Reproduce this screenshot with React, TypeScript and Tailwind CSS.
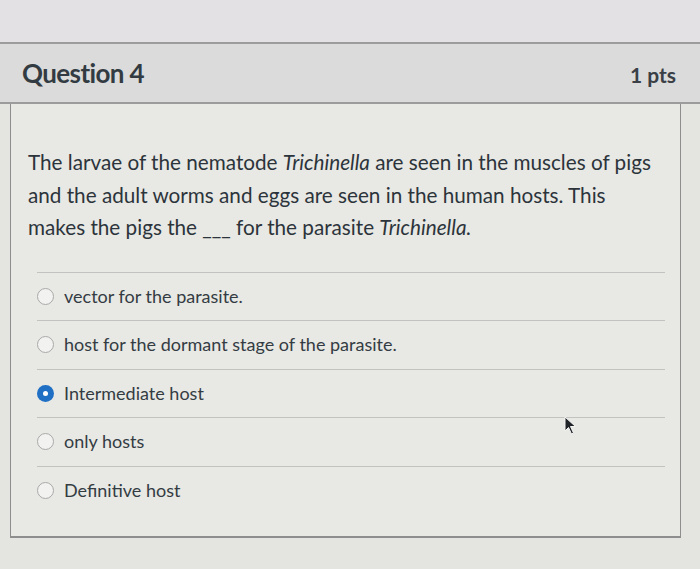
const OPTIONS = [
  { label: "vector for the parasite.", checked: false },
  { label: "host for the dormant stage of the parasite.", checked: false },
  { label: "Intermediate host", checked: true },
  { label: "only hosts", checked: false },
  { label: "Definitive host", checked: false },
];

function Radio({ checked }: { checked: boolean }) {
  if (checked) {
    return (
      <span className="flex h-[17px] w-[17px] shrink-0 items-center justify-center rounded-full bg-[#1f6fc4]">
        <span className="h-[5px] w-[5px] rounded-full bg-white" />
      </span>
    );
  }
  return <span className="h-[17px] w-[17px] shrink-0 rounded-full border border-[#a9a9a9] bg-[#f2f2f0]" />;
}

export default function App() {
  return (
    <div className="relative h-[569px] w-[700px] overflow-hidden bg-[#e4e4e0] font-['Lato',sans-serif] text-[#2d3b45]">
      <div className="h-[42px] bg-[#e3e1e4]" />
      <div className="flex h-[62px] items-center justify-between border-y-2 border-[#9c9c9c] bg-[#dbdbdb] pl-[22px] pr-[24px]">
        <h2 className="text-[26px] font-bold tracking-[-0.6px] text-[#333b42]">Question 4</h2>
        <span className="pt-[4px] text-[21px] font-bold text-[#3a4046]">1 pts</span>
      </div>
      <div className="ml-[10px] mr-[19px] h-[434px] border-x border-b-2 border-[#8e8e8e] bg-[#e8e8e4]">
        <p className="pl-[17px] pr-[22px] pt-[42px] text-[20.7px] leading-[32.5px] text-[#2c343b]">
          The larvae of the nematode <i>Trichinella</i> are seen in the muscles of pigs and the adult worms and
          eggs are seen in the human hosts. This makes the pigs the ___ for the parasite <i>Trichinella.</i>
        </p>
        <div className="ml-[26px] mr-[15px] mt-[28px] border-t border-[#c2c2c0]">
          {OPTIONS.map((o) => (
            <div
              key={o.label}
              className="flex h-[48.5px] items-center gap-[10px] border-b border-[#c2c2c0] last:border-b-0"
            >
              <Radio checked={o.checked} />
              <span className="text-[18px] text-[#343c43]">{o.label}</span>
            </div>
          ))}
        </div>
      </div>

      {/* mouse pointer */}
      <svg className="absolute left-[564px] top-[416px]" width="14" height="20" viewBox="0 0 14 20">
        <path d="M1 1 L1 15 L4.5 11.5 L7.5 18 L9.5 17 L6.5 10.5 L11.5 10.5 Z" fill="#1f2328" stroke="#f4f4f2" strokeWidth="1" />
      </svg>
    </div>
  );
}
